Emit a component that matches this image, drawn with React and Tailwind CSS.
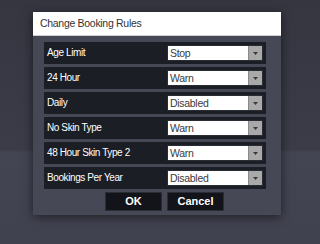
import React from 'react';

const rules = [
  { label: 'Age Limit', value: 'Stop' },
  { label: '24 Hour', value: 'Warn' },
  { label: 'Daily', value: 'Disabled' },
  { label: 'No Skin Type', value: 'Warn' },
  { label: '48 Hour Skin Type 2', value: 'Warn' },
  { label: 'Bookings Per Year', value: 'Disabled' },
];

function Select({ value }) {
  return (
    <div className="w-[96px] h-[16px] flex border border-[#2a2c33] bg-white">
      <div className="flex-1 flex items-center pl-[2px] text-[10.5px] text-[#3a3a3a] tracking-[-0.3px] leading-none">
        {value}
      </div>
      <div className="w-[14px] bg-[#a9a9a9] border-l border-[#8a8a8a] flex items-center justify-center">
        <svg width="5" height="3" viewBox="0 0 5 3">
          <path d="M0 0h5L2.5 3z" fill="#3a3a3a" />
        </svg>
      </div>
    </div>
  );
}

export default function App() {
  return (
    <div
      className="w-[320px] h-[244px] pt-[12px] pl-[33px] bg-[linear-gradient(to_bottom,#353640_0px,#3b3c48_150px,#444553_152px,#41424f_244px)]"
      style={{ fontFamily: '"Liberation Sans", Arial, sans-serif' }}
    >
      <div className="w-[248px] h-[203px] bg-[#474855] shadow-[0_2px_10px_rgba(0,0,0,0.55)] flex flex-col">
        {/* Title */}
        <div className="h-[24px] bg-white border-b border-[#cfcfcf] flex items-center pl-[7px] text-[10.5px] text-[#333] tracking-[-0.3px]">
          Change Booking Rules
        </div>

        {/* Rules */}
        <div className="mt-[6px] ml-[11px] w-[222px] flex flex-col gap-[3px]">
          {rules.map(r => (
            <div key={r.label} className="h-[22px] bg-[#1b1e25] flex items-center justify-between pl-[3px] pr-[3px]">
              <span className="text-[10px] text-white tracking-[-0.4px] leading-none">{r.label}</span>
              <Select value={r.value} />
            </div>
          ))}
        </div>

        {/* Buttons */}
        <div className="mt-[3px] ml-[72px] flex gap-[5px]">
          <button className="w-[57px] h-[19px] bg-[#121419] border border-[#2a2d35] text-white text-[11px] font-bold">
            OK
          </button>
          <button className="w-[57px] h-[19px] bg-[#121419] border border-[#2a2d35] text-white text-[11px] font-bold">
            Cancel
          </button>
        </div>
      </div>
    </div>
  );
}
